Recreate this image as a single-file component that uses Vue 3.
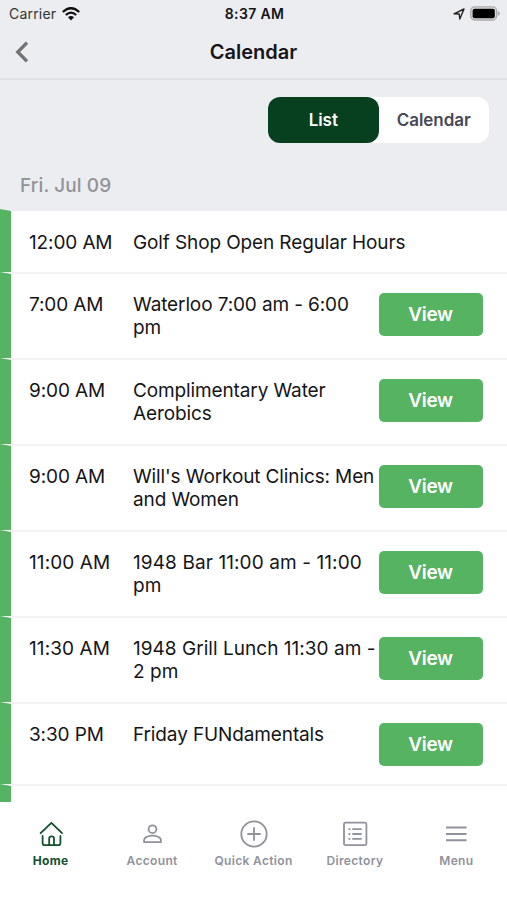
<script setup>
const events = [
  { time: '12:00 AM', lines: ['Golf Shop Open Regular Hours'], size: 'short' },
  { time: '7:00 AM', lines: ['Waterloo 7:00 am - 6:00', 'pm'], view: true },
  { time: '9:00 AM', lines: ['Complimentary Water', 'Aerobics'], view: true },
  { time: '9:00 AM', lines: ["Will's Workout Clinics: Men", 'and Women'], view: true },
  { time: '11:00 AM', lines: ['1948 Bar 11:00 am - 11:00', 'pm'], view: true, numeric: 'numeric' },
  { time: '11:30 AM', lines: ['1948 Grill Lunch 11:30 am -', '2 pm'], view: true, numeric: 'numeric mixed' },
  { time: '3:30 PM', lines: ['Friday FUNdamentals'], view: true, size: 'medium' },
  { time: '', lines: [], size: 'cut' }
]
const tabs = ['Home', 'Account', 'Quick Action', 'Directory', 'Menu']
</script>

<template>
  <div class="screen">
    <div class="status">
      <div class="status-side">
        <span class="carrier">Carrier</span>
        <svg class="wifi" width="18" height="14" viewBox="0 0 18 14" fill="none" stroke="#111" stroke-width="2.3">
          <path d="M.8 5Q9-2.6 17.2 5" />
          <path d="M3.8 8Q9 3.2 14.2 8" />
          <path d="M6 10.3Q9 7.8 12 10.3L9 13.4Z" fill="#111" stroke="none" />
        </svg>
      </div>
      <span class="clock">8:37 AM</span>
      <div class="status-side right">
        <svg width="12" height="12" viewBox="0 0 12 12" fill="none" stroke="#222" stroke-width="1.4" stroke-linejoin="round">
          <path d="M1 5.8 11 1 6.8 11 6.2 6Z" />
        </svg>
        <svg class="battery" width="30" height="15" viewBox="0 0 30 15">
          <rect x=".8" y=".8" width="25.8" height="13.2" rx="4" fill="#dedee0" stroke="#aaaaac" stroke-width="1.3" />
          <rect x="2.6" y="2.7" width="22.2" height="9.5" rx="2" fill="#000" />
          <path d="M27.8 5q2 .6 2 2.5t-2 2.5Z" fill="#aaaaac" />
        </svg>
      </div>
    </div>
    <header class="nav">
      <svg class="back" width="14" height="22" viewBox="0 0 14 22" fill="none" stroke="#747476" stroke-width="3.4">
        <path d="M12 1.6 2.8 11 12 20.4" />
      </svg>
      <h1>Calendar</h1>
    </header>
    <div class="switcher">
      <div class="segments">
        <button class="segment active">List</button>
        <button class="segment">Calendar</button>
      </div>
    </div>
    <h2 class="day">Fri. Jul 09</h2>
    <main class="list">
      <div v-for="(e, i) in events" :key="i" class="row" :class="[e.size, e.numeric]">
        <span class="time">{{ e.time }}</span>
        <div class="title">
          <div v-for="l in e.lines" :key="l"><span>{{ l }}</span></div>
        </div>
        <button v-if="e.view" class="view">View</button>
      </div>
    </main>
    <nav class="tabs">
      <div v-for="(t, i) in tabs" :key="t" class="tab" :class="{ current: i === 0 }">
        <svg width="28" height="28" viewBox="0 0 28 28" fill="none" stroke="currentColor" stroke-width="1.8" stroke-linecap="round" stroke-linejoin="round">
          <template v-if="i === 0">
            <path d="M3.6 13.2 14.4 2.8 25 13.2" />
            <path d="M5.6 16v7q0 2.2 2.2 2.2h2.6q1.8 0 1.8-1.8v-4.8q0-2.2 2.4-2.2t2.4 2.2v4.8q0 1.8 1.8 1.8h2.4q2.2 0 2.2-2.2V16" />
            <path d="M12 25.2h5" />
          </template>
          <template v-else-if="i === 1">
            <circle cx="14.5" cy="9.2" r="3.9" />
            <path d="M6.1 22.2v-2.1c0-3 5.1-4.5 8.4-4.5s8.4 1.5 8.4 4.5v2.1Z" />
          </template>
          <template v-else-if="i === 2">
            <circle cx="14" cy="14" r="12.7" />
            <path d="M14 8v12M8 14h12" />
          </template>
          <template v-else-if="i === 3">
            <rect x="3" y="2.7" width="22.4" height="22.4" rx="1.4" />
            <path d="M12 9.2h8M12 14h8M12 18.9h8M8.2 9.2h.4M8.2 14h.4M8.2 18.9h.4" />
          </template>
          <path v-else stroke-width="2" stroke-linecap="butt" d="M4 7.6h20.5M4 14h20.5M4 20.2h20.5" />
        </svg>
        <span>{{ t }}</span>
      </div>
    </nav>
  </div>
</template>

<style>
body {
  margin: 0;
}
</style>

<style scoped>
.screen {
  width: 507px;
  height: 900px;
  overflow: hidden;
  display: flex;
  flex-direction: column;
  background: #ecedf1;
  color: #151517;
  font-family: Inter, "Liberation Sans", sans-serif;
}
button {
  border: 0;
  padding: 0;
  font: inherit;
}
.status {
  height: 27px;
  display: flex;
  align-items: center;
  padding: 0 7px 0 9px;
  font-size: 14px;
  flex: none;
}
.status-side {
  flex: 1;
  display: flex;
  align-items: center;
  gap: 6px;
}
.right {
  justify-content: flex-end;
  gap: 5px;
}
.carrier {
  color: #333;
  letter-spacing: 0.2px;
}
.clock {
  font-weight: 600;
  letter-spacing: 0.35px;
}
.nav {
  box-sizing: border-box;
  height: 53px;
  padding-bottom: 1px;
  flex: none;
  display: grid;
  grid-template-columns: 60px 1fr 60px;
  align-items: center;
  border-bottom: 2px solid #e0e1e4;
}
.back {
  margin-left: 15px;
}
h1 {
  margin: 0;
  text-align: center;
  font-size: 20px;
  font-weight: 600;
}
.switcher {
  padding: 17px 18px 0 0;
  display: flex;
  justify-content: flex-end;
}
.segments {
  display: flex;
  width: 221px;
  height: 46px;
  background: #fff;
  border-radius: 12px;
}
.segment {
  width: 111px;
  background: none;
  border-radius: 12px;
  font-size: 17px;
  font-weight: 600;
  letter-spacing: -0.05px;
  color: #484955;
}
.segment.active {
  background: #06401f;
  color: #fff;
}
.day {
  margin: 0;
  height: 66px;
  line-height: 86px;
  padding-left: 20px;
  font-size: 19px;
  font-weight: 500;
  letter-spacing: 0.1px;
  color: #929398;
  flex: none;
}
.list {
  height: 593px;
  overflow: hidden;
  flex: none;
  background: #fff;
}
.row {
  box-sizing: border-box;
  height: 86px;
  display: flex;
  align-items: flex-start;
  border-top: 2px solid #f2f2f4;
  border-left: 11px solid #56b362;
  padding: 18.5px 24.5px 0 18px;
  font-size: 19px;
  line-height: 24px;
  letter-spacing: -0.12px;
  background: #fff;
}
.row:first-child {
  border-top-color: #ecedf1;
}
.short {
  height: 63px;
  line-height: 25px;
}
.medium {
  height: 82px;
}
.time {
  width: 104px;
  flex: none;
}
.title {
  width: 245.5px;
  flex: none;
  white-space: nowrap;
  line-height: 23px;
  padding-top: 0.5px;
}
.short .title {
  line-height: 25px;
  padding-top: 0;
}
.numeric {
  letter-spacing: 0.1px;
}
.mixed .title {
  letter-spacing: 0.03px;
}
.view {
  width: 104px;
  height: 43px;
  padding-top: 1px;
  flex: none;
  border-radius: 5px;
  background: #56b362;
  color: #fff;
  font-size: 19px;
  font-weight: 600;
  letter-spacing: -0.3px;
}
.tabs {
  flex: 1;
  background: #fff;
  display: flex;
  padding-top: 18px;
}
.tab {
  flex: 1;
  display: flex;
  flex-direction: column;
  align-items: center;
  gap: 5px;
  color: #90929c;
  font-size: 12px;
  line-height: 16px;
  font-weight: 600;
  letter-spacing: 0.33px;
  white-space: nowrap;
}
.current {
  color: #12502f;
  font-weight: 700;
}
</style>
